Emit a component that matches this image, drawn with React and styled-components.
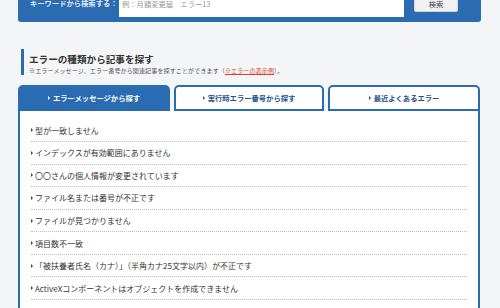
import styled, { createGlobalStyle } from 'styled-components'

const blue = '#2b6bb2'

const GlobalStyle = createGlobalStyle`
  html, body {
    margin: 0;
    padding: 0;
    background: #f4f5f7;
    overflow: hidden;
  }
  body {
    font-family: "Noto Sans CJK JP", "Noto Sans", sans-serif;
    color: #333;
  }
`

const Page = styled.div`
  width: 462px;
  margin-left: 18px;
`

const SearchBar = styled.div`
  display: flex;
  align-items: flex-start;
  height: 42px;
  margin-top: -20px;
  padding: 0 12px;
  background: ${blue};
  border-radius: 0 0 3px 3px;
  box-sizing: border-box;
  width: 463px;
`

const SearchLabel = styled.span`
  margin-top: 19px;
  width: 89px;
  font-size: 7.3px;
  line-height: 9px;
  font-weight: bold;
  color: #dfe8f5;
  white-space: nowrap;
`

const SearchInput = styled.div`
  margin-top: 15px;
  width: 285px;
  height: 22px;
  background: #fff;
  display: flex;
  align-items: flex-end;
  padding: 0 0 8px 3px;
  box-sizing: border-box;
  font-size: 7.3px;
  line-height: 9px;
  color: #999;
  white-space: pre;
`

const SearchButton = styled.div`
  margin: 12px 0 0 10px;
  width: 44px;
  height: 20px;
  background: #f1f1f1;
  border: 1px solid #d6d6d6;
  border-radius: 2px;
  box-sizing: border-box;
  display: flex;
  align-items: flex-end;
  justify-content: center;
  padding-bottom: 2px;
  font-size: 7.3px;
  line-height: 9px;
  color: #444;
`

const Heading = styled.div`
  margin: 27px 0 0 3px;
  height: 26px;
  border-left: 3px solid ${blue};
  padding-left: 5px;
  display: flex;
  flex-direction: column;
`

const Title = styled.h2`
  margin: 3px 0 0;
  font-size: 9.6px;
  line-height: 14px;
  font-weight: bold;
  color: #333;
  white-space: nowrap;
`

const Sub = styled.p`
  margin: 0;
  font-size: 6px;
  letter-spacing: 0.14px;
  line-height: 9px;
  color: #555;
  white-space: nowrap;
`

const Example = styled.span`
  color: #e2402a;
  text-decoration: underline;
`

const Tabs = styled.div`
  margin-top: 10px;
  display: grid;
  grid-template-columns: 152px 150px 152px;
  column-gap: 4px;
`

const Tab = styled.div`
  height: 26px;
  border: 2px solid ${blue};
  border-radius: 5px 5px 0 0;
  box-sizing: border-box;
  background: ${p => (p.$active ? blue : '#fff')};
  color: ${p => (p.$active ? '#fff' : '#24528f')};
  display: flex;
  align-items: center;
  justify-content: center;
  font-size: 7.3px;
  font-weight: bold;
  white-space: nowrap;
`

const Arrow = styled.span`
  display: inline-block;
  width: 0;
  height: 0;
  border-top: 2px solid transparent;
  border-bottom: 2px solid transparent;
  border-left: 2.5px solid ${p => p.$color || '#444'};
  margin-right: ${p => p.$gap || 2}px;
`

const Panel = styled.div`
  border: 2px solid ${blue};
  border-top: none;
  background: #fff;
  padding: 8.5px 11px 20px 11px;
  height: 300px;
`

const Row = styled.div`
  height: 22.57px;
  box-sizing: border-box;
  border-bottom: 1px dotted #bdbdbd;
  display: flex;
  align-items: center;
  font-size: 8px;
  color: #333;
  white-space: nowrap;
`

const tabs = [
  { label: 'エラーメッセージから探す', active: true },
  { label: '実行時エラー番号から探す' },
  { label: '最近よくあるエラー' },
]

const items = [
  '型が一致しません',
  'インデックスが有効範囲にありません',
  '〇〇さんの個人情報が変更されています',
  'ファイル名または番号が不正です',
  'ファイルが見つかりません',
  '項目数不一致',
  '「被扶養者氏名（カナ）」（半角カナ25文字以内）が不正です',
  'ActiveXコンポーネントはオブジェクトを作成できません',
]

export default function App() {
  return (
    <>
      <GlobalStyle />
      <Page>
        <SearchBar>
          <SearchLabel>キーワードから検索する：</SearchLabel>
          <SearchInput>例：月額変更届　エラー13</SearchInput>
          <SearchButton>検索</SearchButton>
        </SearchBar>

        <Heading>
          <Title>エラーの種類から記事を探す</Title>
          <Sub>
            ※エラーメッセージ、エラー番号から関連記事を探すことができます（<Example>※エラーの表示例</Example>）。
          </Sub>
        </Heading>

        <Tabs>
          {tabs.map(t => (
            <Tab key={t.label} $active={t.active}>
              <Arrow $color={t.active ? '#fff' : '#24528f'} $gap={3} />
              {t.label}
            </Tab>
          ))}
        </Tabs>
        <Panel>
          {items.map(item => (
            <Row key={item}>
              <Arrow />
              {item}
            </Row>
          ))}
        </Panel>
      </Page>
    </>
  )
}
